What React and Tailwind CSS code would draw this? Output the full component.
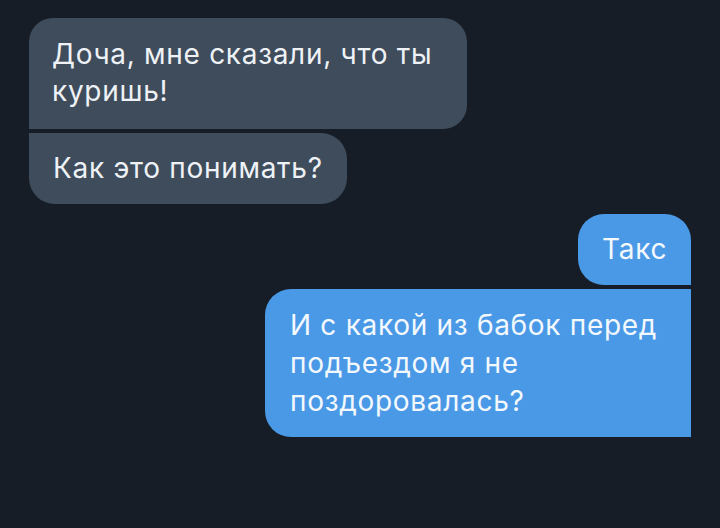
export default function App() {
  const font = { fontFamily: 'Inter, "Liberation Sans", Arial, sans-serif' };
  return (
    <div
      className="w-[720px] h-[528px] bg-[#161d27] overflow-hidden flex flex-col px-[29px] pt-[18px]"
      style={font}
    >
      {/* incoming group */}
      <div className="flex flex-col items-start gap-[4px]">
        <div className="w-[438px] bg-[#3e4c5b] text-[#eef2f6] text-[28px] tracking-[0.7px] leading-[37px] pl-[23px] pr-[12px] pt-[18px] pb-[19px] rounded-[24px] rounded-bl-none">
          Доча, мне сказали, что ты куришь!
        </div>
        <div className="w-[318px] bg-[#3e4c5b] text-[#eef2f6] text-[28px] tracking-[0.7px] leading-[37px] pl-[24px] pr-[12px] py-[17px] rounded-[26px] rounded-tl-none">
          Как это понимать?
        </div>
      </div>

      {/* outgoing group */}
      <div className="flex flex-col items-end gap-[4px] mt-[10px]">
        <div className="w-[113px] bg-[#4a99e6] text-[#f3f8fd] text-[28px] tracking-[0.7px] leading-[37px] pl-[24px] pr-[8px] py-[17px] rounded-[26px] rounded-br-none">
          Такс
        </div>
        <div className="w-[426px] bg-[#4a99e6] text-[#f3f8fd] text-[28px] tracking-[0.7px] leading-[38px] pl-[25px] pr-[12px] py-[17px] rounded-[26px] rounded-tr-none rounded-br-none">
          И с какой из бабок перед подъездом я не поздоровалась?
        </div>
      </div>
    </div>
  );
}
